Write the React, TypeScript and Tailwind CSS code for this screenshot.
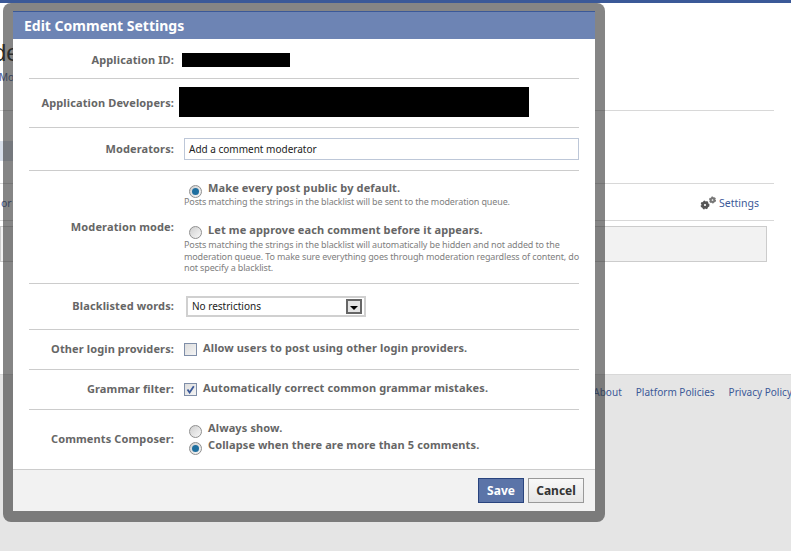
import React from "react";

const font = "font-['Noto_Sans',sans-serif]";
const strong = "text-[11px] tracking-[0.12px] font-bold text-[#666666] whitespace-nowrap";
const small = "text-[9px] tracking-[-0.13px] text-[#808080]";

function Radio({ on }: { on?: boolean }) {
  return (
    <span className="flex h-[13px] w-[13px] shrink-0 items-center justify-center rounded-full border border-[#8f8f8f] bg-gradient-to-br from-[#cfcfcf] to-[#f8f8f8]">
      {on && <span className="h-[7px] w-[7px] rounded-full bg-[#1f6f9f]" />}
    </span>
  );
}

function Check({ on }: { on?: boolean }) {
  return (
    <span className="flex h-[13px] w-[13px] shrink-0 items-center justify-center border border-[#7f8ea8] bg-gradient-to-br from-[#dddddd] to-[#f4f4f4]">
      {on && (
        <svg width="9" height="9" viewBox="0 0 9 9">
          <path d="M1.5 4.5 L3.6 7.5 L7.8 1.2" fill="none" stroke="#3b5998" strokeWidth="1.8" />
        </svg>
      )}
    </span>
  );
}

function Row({ label, className, children }: { label: string; className: string; children: React.ReactNode }) {
  return (
    <div className={`flex items-center border-b border-[#cccccc] last:border-b-0 ${className}`}>
      <div className={`w-[145px] shrink-0 text-right ${strong}`}>{label}</div>
      <div className="ml-[10px] min-w-0 flex-1">{children}</div>
    </div>
  );
}

function Gear({ cx, cy, r, color }: { cx: number; cy: number; r: number; color: string }) {
  return (
    <g>
      <circle cx={cx} cy={cy} r={r} fill="none" stroke={color} strokeWidth={r * 1.1} />
      <circle cx={cx} cy={cy} r={r * 1.5} fill="none" stroke={color} strokeWidth={r * 0.7} strokeDasharray="1.6 1.4" />
    </g>
  );
}

export default function App() {
  return (
    <div className={`relative h-[551px] w-[791px] overflow-hidden bg-white ${font}`}>
      <div className="h-[3px] bg-[#3b5998]" />
      <div className="flex h-[371px] flex-col pr-[17px]">
        <div className="h-[107px] overflow-hidden">
          <div className="ml-[-7px] mt-[36px] h-[28px] font-['Liberation_Sans',sans-serif] text-[24px] leading-[28px] text-[#222222]">de</div>
          <div className="ml-[-1px] mt-[3px] text-[10px] leading-[14px] text-[#3b5998]">Mo</div>
        </div>
        <div className="h-[73px] border-t border-[#d8d8d8] pt-[30px]">
          <div className="h-[20px] w-[14px] bg-[#d8dfea]" />
        </div>
        <div className="flex h-[37px] items-center justify-between border-t border-[#d8d8d8] pr-[15px] pt-[3px] text-[10.5px] text-[#3b5998]">
          <span className="ml-[1px]">or</span>
          <span className="flex items-center">
            <svg width="17" height="14" viewBox="0 0 17 14" className="mr-[2px] mt-[-2px]">
              <Gear cx={5} cy={9} r={2.4} color="#555555" />
              <Gear cx={12.5} cy={4} r={1.9} color="#777777" />
            </svg>
            Settings
          </span>
        </div>
        <div className="border-t border-[#d8d8d8] pr-[7px] pt-[5px]">
          <div className="h-[36px] border border-[#cccccc] bg-[#f2f2f2]" />
        </div>
      </div>
      <div className="flex h-[177px] justify-end gap-[14px] whitespace-nowrap border-t border-[#d8d8d8] bg-[#e5e5e5] pt-[10px] text-[10px] tracking-[0.02px] text-[#3b5998]">
        <span>About</span>
        <span>Platform Policies</span>
        <span className="mr-[-1px]">Privacy Policy</span>
      </div>

      <div className="absolute left-[3px] top-[3px] h-[519px] w-[602px] rounded-[8px] bg-[#333333]/60 px-[10px] pt-[8px]">
        <div className="flex h-[500px] w-[582px] flex-col border-b border-[#555555] bg-white">
          <div className="flex h-[28px] shrink-0 items-center border-t border-[#3b5998] bg-[#6d84b4] pl-[11px] text-[14px] font-bold text-white">
            Edit Comment Settings
          </div>
          <div className="flex-1 px-[16px]">
            <Row label="Application ID:" className="h-[40px] pt-[3px]">
              <div className="ml-[-2px] h-[14px] w-[108px] bg-black" />
            </Row>
            <Row label="Application Developers:" className="h-[49px]">
              <div className="ml-[-5px] mt-[-2px] h-[30px] w-[350px] bg-black" />
            </Row>
            <Row label="Moderators:" className="h-[43px]">
              <div className="flex h-[22px] w-[395px] items-center border border-[#bdc7d8] pl-[4px] text-[10px] text-[#222222]">
                Add a comment moderator
              </div>
            </Row>
            <Row label="Moderation mode:" className="h-[113px]">
              <div className="flex flex-col">
                <div className={`flex h-[15px] items-center gap-[6px] pl-[5px] ${strong}`}>
                  <span className="mt-[8px]"><Radio on /></span> Make every post public by default.
                </div>
                <div className={`mt-[1px] leading-[11px] ${small}`}>
                  Posts matching the strings in the blacklist will be sent to the moderation queue.
                </div>
                <div className={`mt-[15px] flex h-[15px] items-center gap-[6px] pl-[5px] ${strong}`}>
                  <span className="mt-[6px]"><Radio /></span> Let me approve each comment before it appears.
                </div>
                <div className={`mt-[2px] w-[395px] leading-[11.5px] ${small}`}>
                  Posts matching the strings in the blacklist will automatically be hidden and not added to the moderation queue. To make sure everything goes through moderation regardless of content, do not specify a blacklist.
                </div>
              </div>
            </Row>
            <Row label="Blacklisted words:" className="h-[46px]">
              <div className="ml-[2px] flex h-[21px] w-[180px] items-center justify-between border-2 border-[#d0d0d0] pl-[4px] pr-[2px] text-[10px] text-[#222222]">
                No restrictions
                <span className="flex h-[15px] w-[16px] items-center justify-center border-2 border-[#666666] bg-[#e4e4e4]">
                  <span className="mt-[2px] h-0 w-0 border-x-[4px] border-t-[4px] border-x-transparent border-t-black" />
                </span>
              </div>
            </Row>
            <Row label="Other login providers:" className="h-[40px]">
              <div className={`flex items-center gap-[6px] ${strong}`}>
                <Check /> <span className="mt-[-2px]">Allow users to post using other login providers.</span>
              </div>
            </Row>
            <Row label="Grammar filter:" className="h-[40px]">
              <div className={`flex items-center gap-[6px] ${strong}`}>
                <Check on /> <span className="mt-[-2px]">Automatically correct common grammar mistakes.</span>
              </div>
            </Row>
            <Row label="Comments Composer:" className="h-[59px]">
              <div className={`mb-[5px] flex flex-col gap-[2px] pl-[5px] ${strong}`}>
                <div className="flex h-[15px] items-center gap-[6px]"><span className="mt-[6px]"><Radio /></span> Always show.</div>
                <div className="flex h-[15px] items-center gap-[6px]"><span className="mt-[6px]"><Radio on /></span> Collapse when there are more than 5 comments.</div>
              </div>
            </Row>
          </div>
          <div className="flex h-[42px] shrink-0 items-center justify-end gap-[4px] border-t border-[#cccccc] bg-[#f2f2f2] pr-[11px]">
            <button className="h-[25px] w-[46px] border border-[#29447e] bg-[#5b74a8] text-[12px] font-bold text-white">Save</button>
            <button className="h-[25px] w-[56px] border border-[#999999] bg-gradient-to-b from-[#f8f8f8] to-[#e6e6e6] text-[12px] font-bold text-[#333333]">Cancel</button>
          </div>
        </div>
      </div>
    </div>
  );
}
